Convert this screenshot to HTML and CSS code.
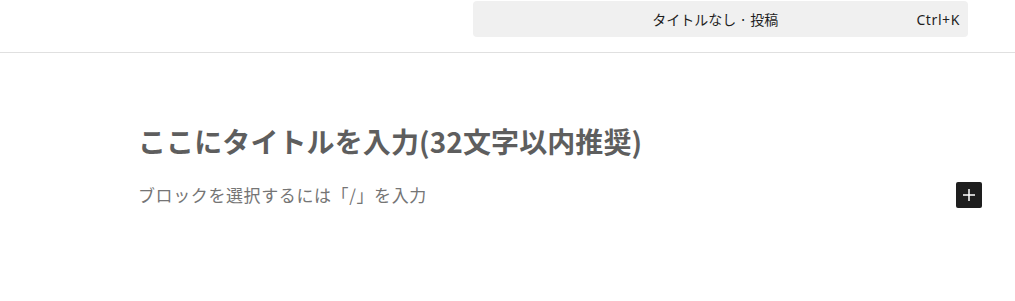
FILE: index.html
```html
<!DOCTYPE html>
<html lang="ja">
<head>
<meta charset="utf-8">
<link rel="stylesheet" href="styles.css">
</head>
<body>
<header class="topbar">
  <div class="command">
    <span class="command-title">タイトルなし · 投稿</span>
    <span class="command-key">Ctrl+K</span>
  </div>
</header>
<main class="canvas">
  <h1 class="post-title">ここにタイトルを入力(32文字以内推奨)</h1>
  <div class="block-row">
    <p class="appender">ブロックを選択するには「/」を入力</p>
    <button class="inserter" aria-label="ブロックを追加">
      <svg width="24" height="24" viewBox="0 0 24 24"><path d="M12 6v12M6 12h12" stroke="#fff" stroke-width="1.5" fill="none"/></svg>
    </button>
  </div>
</main>
</body>
</html>
```
FILE: styles.css
```css
* { box-sizing: border-box; }
html, body { margin: 0; padding: 0; background: #fff; }
body {
  font-family: "Noto Sans", "Noto Sans CJK JP", sans-serif;
  color: #1e1e1e;
  width: 1015px;
  height: 301px;
  overflow: hidden;
}
.topbar {
  height: 53px;
  border-bottom: 1px solid #e0e0e0;
  display: flex;
  justify-content: flex-end;
  align-items: flex-start;
  padding: 1px 47px 0 0;
}
.command {
  width: 495px;
  height: 36px;
  background: #f0f0f0;
  border-radius: 4px;
  display: flex;
  align-items: center;
  padding: 0 8px;
}
.command-title {
  flex: 1;
  text-align: center;
  font-size: 14px;
  padding-left: 33px;
  color: #1e1e1e;
  font-family: "Noto Sans CJK JP", sans-serif;
}
.command-key {
  font-size: 14px;
  letter-spacing: 0.6px;
  color: #1e1e1e;
}
.canvas {
  padding: 68px 33px 0 138px;
}
.post-title {
  margin: 0;
  font-size: 28px;
  font-weight: 700;
  line-height: 40px;
  letter-spacing: 0.1px;
  color: #5e5e5e;
  font-family: "Noto Sans CJK JP", sans-serif;
}
.block-row {
  margin-top: 21px;
  display: flex;
  align-items: center;
  justify-content: space-between;
}
.appender {
  margin: 0;
  font-size: 17px;
  line-height: 26px;
  letter-spacing: 0.6px;
  color: #757575;
  font-family: "Noto Sans CJK JP", sans-serif;
}
.inserter {
  width: 26px;
  height: 26px;
  padding: 1px;
  border: 0;
  border-radius: 2px;
  background: #1e1e1e;
  display: flex;
  align-items: center;
  justify-content: center;
}
```
